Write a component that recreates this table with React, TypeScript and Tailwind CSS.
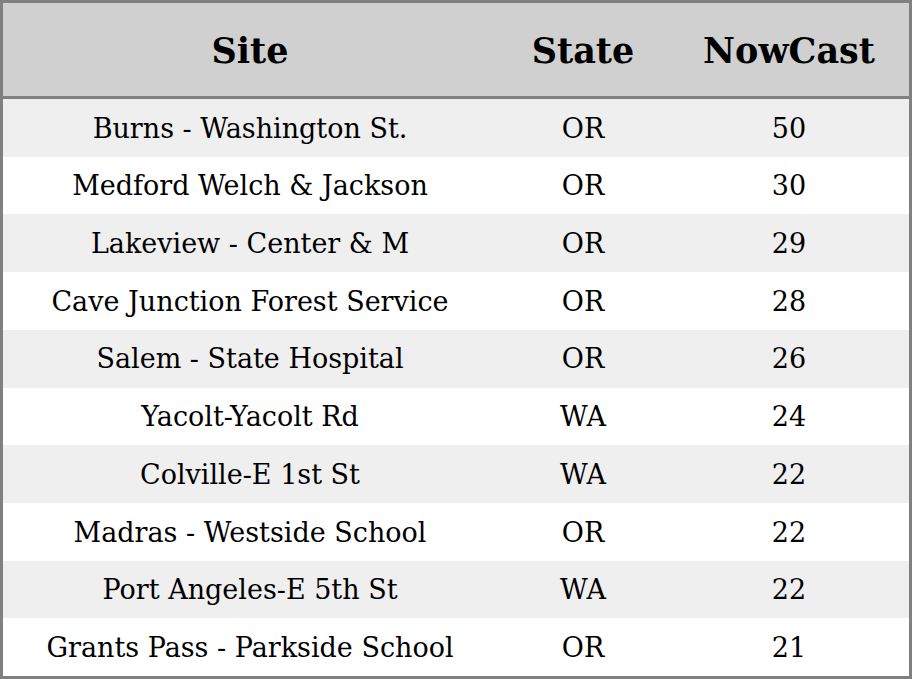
import React from 'react';

const rows = [
  { site: 'Burns - Washington St.', state: 'OR', value: 50 },
  { site: 'Medford Welch & Jackson', state: 'OR', value: 30 },
  { site: 'Lakeview - Center & M', state: 'OR', value: 29 },
  { site: 'Cave Junction Forest Service', state: 'OR', value: 28 },
  { site: 'Salem - State Hospital', state: 'OR', value: 26 },
  { site: 'Yacolt-Yacolt Rd', state: 'WA', value: 24 },
  { site: 'Colville-E 1st St', state: 'WA', value: 22 },
  { site: 'Madras - Westside School', state: 'OR', value: 22 },
  { site: 'Port Angeles-E 5th St', state: 'WA', value: 22 },
  { site: 'Grants Pass - Parkside School', state: 'OR', value: 21 },
];

const App = () => {
  return (
    <div
      className="w-[912px] h-[679px] border-[3px] border-[#808080] bg-white text-black flex flex-col overflow-hidden"
      style={{ fontFamily: '"DejaVu Serif", serif' }}
    >
      {/* header */}
      <div className="grid grid-cols-[494px_172px_240px] h-[96px] shrink-0 pt-[3px] bg-[#d0d0d0] border-b-[3px] border-[#808080] text-[35px] font-bold items-center text-center">
        <div>Site</div>
        <div>State</div>
        <div>NowCast</div>
      </div>

      {/* rows */}
      <div className="flex flex-col flex-1">
        {rows.map((r, i) => (
          <div
            key={r.site}
            className={`grid grid-cols-[494px_172px_240px] flex-1 pt-[2px] items-center text-center text-[27px] ${i % 2 === 0 ? 'bg-[#efefef]' : 'bg-white'}`}
          >
            <div>{r.site}</div>
            <div>{r.state}</div>
            <div>{r.value}</div>
          </div>
        ))}
      </div>
    </div>
  );
};

export default App;
